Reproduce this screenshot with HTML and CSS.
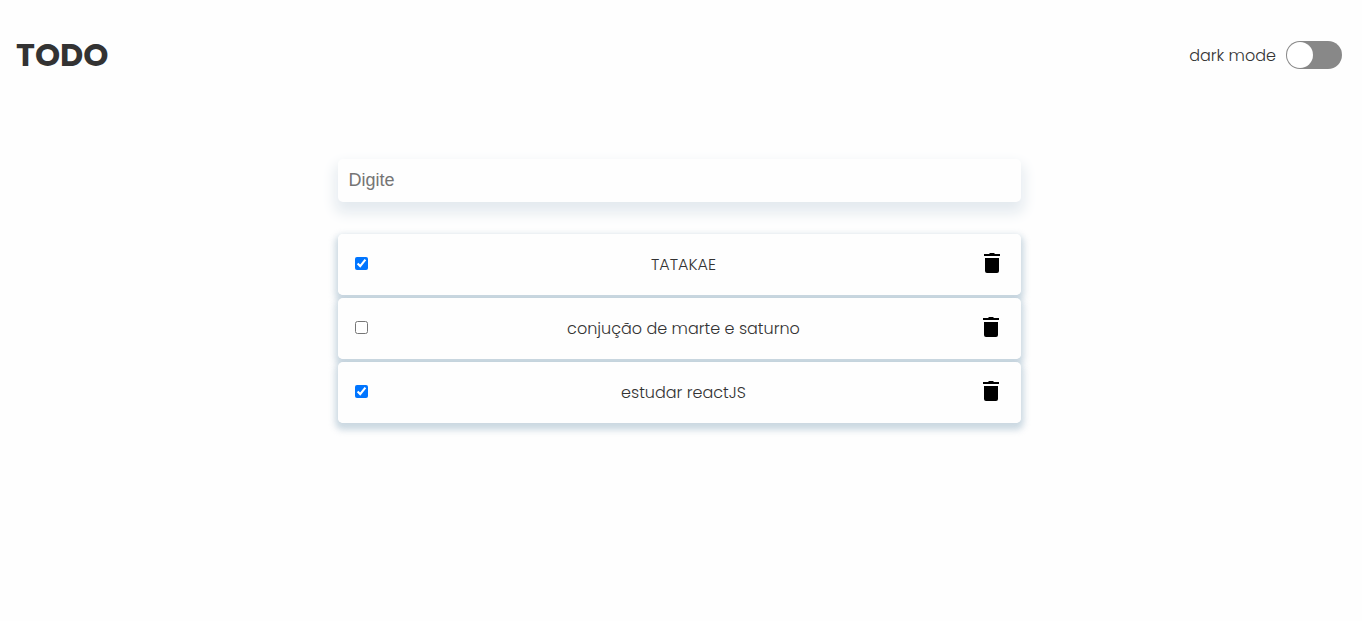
FILE: index.html
```html
<!DOCTYPE html>
<html lang="pt-BR">
<head>
<meta charset="utf-8">
<meta name="viewport" content="width=device-width, initial-scale=1">
<title>TODO</title>
<link rel="stylesheet" href="styles.css">
</head>
<body>
<div class="page">
  <header class="header">
    <h1 class="title">TODO</h1>
    <label class="theme">
      <span class="theme-text">dark mode</span>
      <input class="switch" type="checkbox" role="switch">
    </label>
  </header>
  <main class="main">
    <input class="new-task" type="text" placeholder="Digite" aria-label="Digite">
    <ul class="tasks">
      <li class="task">
        <input class="check" id="t1" type="checkbox" checked>
        <label class="name" for="t1">TATAKAE</label>
        <button class="remove" type="button" aria-label="Remover"><svg class="icon" viewBox="0 0 24 24"><path d="M4 2h5l1-1h4l1 1h5v2H4zM5 6h14v13a2 2 0 0 1-2 2H7a2 2 0 0 1-2-2z"/></svg></button>
      </li>
      <li class="task">
        <input class="check" id="t2" type="checkbox">
        <label class="name" for="t2">conjução de marte e saturno</label>
        <button class="remove" type="button" aria-label="Remover"><svg class="icon" viewBox="0 0 24 24"><path d="M3 2h5l1-1h4l1 1h5v2H3zM4 6h14v13a2 2 0 0 1-2 2H6a2 2 0 0 1-2-2z"/></svg></button>
      </li>
      <li class="task">
        <input class="check" id="t3" type="checkbox" checked>
        <label class="name" for="t3">estudar reactJS</label>
        <button class="remove" type="button" aria-label="Remover"><svg class="icon" viewBox="0 0 24 24"><path d="M3 2h5l1-1h4l1 1h5v2H3zM4 6h14v13a2 2 0 0 1-2 2H6a2 2 0 0 1-2-2z"/></svg></button>
      </li>
    </ul>
  </main>
</div>
</body>
</html>
```
FILE: styles.css
```css
* {
  box-sizing: border-box;
}

body {
  margin: 0;
  background: #fefefe;
  color: #333;
  font: 300 16px/24px Poppins, Inter, sans-serif;
}

.page {
  padding: 31px 20px 31px 16px;
}

.header {
  display: flex;
  align-items: center;
  justify-content: space-between;
  margin-bottom: 80px;
}

.title {
  margin: 0;
  font-size: 32px;
  line-height: 48px;
  font-weight: 700;
}

.theme {
  display: flex;
  align-items: center;
  gap: 10px;
}

.theme-text {
  padding-top: 2px;
}

.switch {
  appearance: none;
  display: flex;
  width: 56px;
  height: 28px;
  margin: 0;
  padding: 1px;
  border-radius: 14px;
  background: #888;
}

.switch::before {
  content: "";
  width: 26px;
  height: 26px;
  border-radius: 50%;
  background: #fff;
}

.switch:checked {
  justify-content: flex-end;
}

.main {
  width: calc(50vw + 2px);
  margin: 0 auto;
}

.new-task {
  display: block;
  width: 100%;
  height: 43px;
  margin-bottom: 32px;
  padding: 0 11px;
  border: 0;
  border-radius: 5px;
  background: #fefefe;
  box-shadow: 0 8px 14px 3px #e4eaef;
  font: 18px "Liberation Sans", Arial, sans-serif;
}

.tasks {
  display: grid;
  gap: 3px;
  margin: 0;
  padding: 0;
  list-style: none;
}

.task {
  position: relative;
  display: flex;
  align-items: center;
  min-height: 61px;
  padding: 0 17px 2px;
  border-radius: 5px;
  background: #fefefe;
}

/* The shadows lie behind every card, so none darkens its neighbour. */
.task::before {
  content: "";
  position: absolute;
  inset: 0;
  z-index: -1;
  border-radius: 5px;
  box-shadow: 0 4px 6px 3px rgba(140, 170, 190, 0.43);
}

.check {
  width: 13px;
  height: 13px;
  margin: 0;
}

.name {
  flex: 1;
  padding: 2px 0 0 20px;
  text-align: center;
}

.remove {
  padding: 0;
  border: 0;
  background: none;
}

.icon {
  display: block;
  width: 24px;
  height: 24px;
}
```
